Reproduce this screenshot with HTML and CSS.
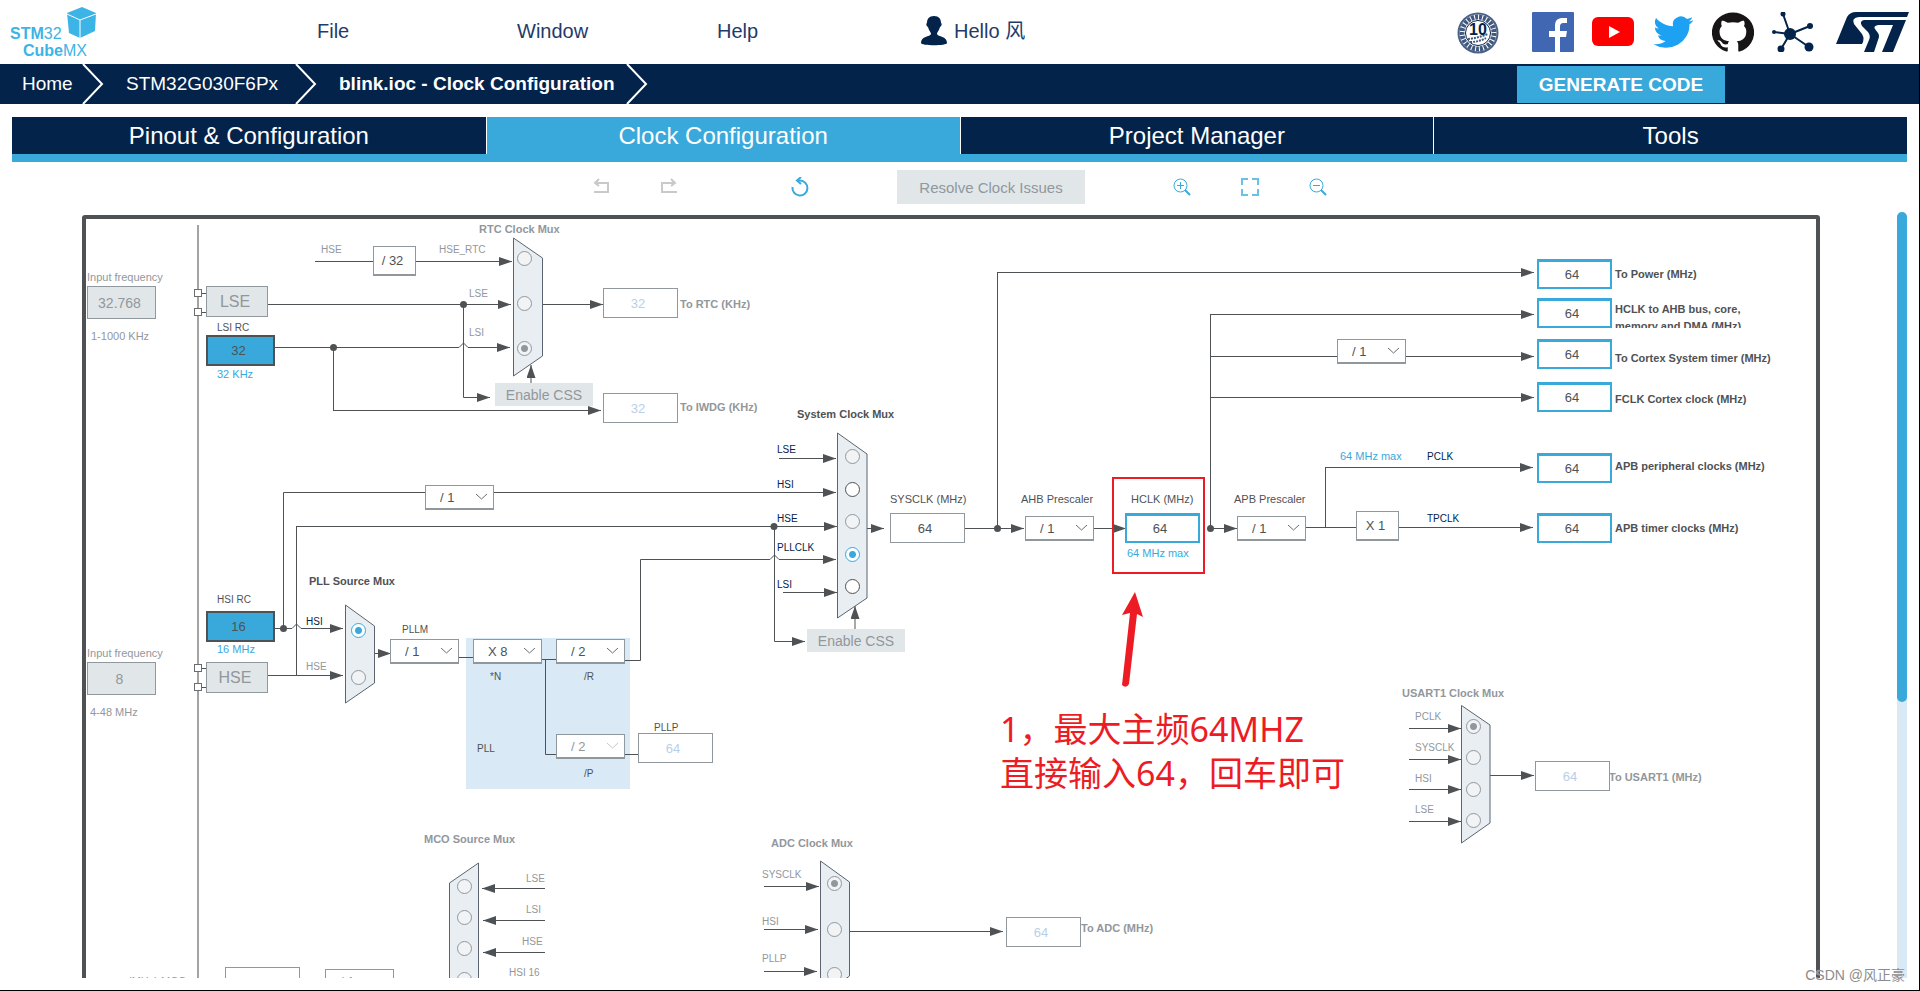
FILE: index.html
```html
<!DOCTYPE html>
<html lang="en">
<head>
<meta charset="utf-8">
<title>STM32CubeMX - blink.ioc</title>
<link rel="stylesheet" href="styles.css">
</head>
<body>
<header class="topbar">
  <a class="logo" href="#" aria-label="STM32CubeMX">
    <svg width="92" height="60" viewBox="6 0 92 60">
      <path fill="#3cb4e6" d="M67 13 82 7 96 13 95 31 80 38 69 33z"/>
      <path fill="none" stroke="#fff" d="M67 14 80 20 96 14M80 20V38"/>
      <text class="logo-text" x="10" y="39"><tspan class="strong">STM</tspan>32</text>
      <text class="logo-text" x="23" y="56"><tspan class="strong">Cube</tspan>MX</text>
    </svg>
  </a>
  <nav class="menu">
    <a href="#">File</a>
    <a href="#">Window</a>
    <a href="#">Help</a>
    <a class="user" href="#">
      <svg width="28" height="30" viewBox="0 0 28 30"><path fill="#03234b" d="M14 0c5 0 7 3 7 7 1 0 1 3-1 4-1 4-3 5-3 7 1 3 10 2 10 9 0 3-26 3-26 0 0-7 9-6 10-9 0-2-2-3-3-7-2-1-2-4-1-4 0-4 2-7 7-7z"/></svg>
      <span>Hello 风</span>
    </a>
  </nav>
  <div class="social">
    <a class="badge" href="#" aria-label="10 years">
      <svg width="42" height="42" viewBox="0 0 42 42">
        <circle cx="21" cy="21" r="19.5" fill="#fff" stroke="#4b6285" stroke-width="2"/>
        <circle cx="21" cy="21" r="16" fill="none" stroke="#41597f" stroke-width="5" stroke-dasharray="3 1"/>
        <circle cx="21" cy="21" r="12.5" fill="#fff" stroke="#03234b"/>
        <path d="M11 27q10-1 20-5M13 30q9 0 16-4" stroke="#41597f" stroke-width="2" stroke-dasharray="2 1" fill="none"/>
        <text class="badge-text" x="21" y="23" text-anchor="middle">10</text>
      </svg>
    </a>
    <a href="#" aria-label="Facebook">
      <svg width="42" height="40" viewBox="0 0 42 40"><rect width="42" height="40" rx="1" fill="#4267b2"/><path fill="#fff" d="M23 40V25h-6v-6h6v-5c0-6 3-8 8-8h4v5h-3c-3 0-4 1-4 4v4h7l-1 6h-6v15z"/></svg>
    </a>
    <a href="#" aria-label="YouTube">
      <svg width="42" height="40" viewBox="0 0 42 40"><rect y="5" width="42" height="29" rx="6" fill="#f00"/><path fill="#fff" d="M17 14v12l11-6z"/></svg>
    </a>
    <a href="#" aria-label="Twitter">
      <svg width="42" height="40" viewBox="0 0 24 24" preserveAspectRatio="none"><path fill="#1da1f2" d="M23.6 4.9c-.8.4-1.7.6-2.7.8 1-.6 1.7-1.5 2.1-2.6-.9.5-1.9.9-3 1.1a4.700 4.700 0 0 0-8 4.300C8 8.300 4.600 6.400 2.300 3.600a4.700 4.700 0 0 0 1.500 6.300c-.8 0-1.5-.2-2.1-.6 0 2.300 1.600 4.200 3.800 4.700-.7.2-1.400.2-2.100.1a4.700 4.700 0 0 0 4.400 3.300A9.500 9.500 0 0 1 .8 19.300a13.400 13.400 0 0 0 20.600-11.900c.9-.7 1.700-1.500 2.200-2.500z"/></svg>
    </a>
    <a href="#" aria-label="GitHub">
      <svg width="42" height="40" viewBox="0 0 24 24" preserveAspectRatio="none"><path fill="#171515" d="M12 .3a12 12 0 0 0-3.800 23.400c.6.1.8-.3.8-.6v-2c-3.300.7-4-1.600-4-1.600-.6-1.400-1.400-1.800-1.400-1.800-1-.7.1-.7.1-.7 1.200 0 1.900 1.200 1.900 1.200 1 1.800 2.800 1.300 3.500 1 0-.8.4-1.300.7-1.600-2.700-.3-5.500-1.300-5.500-6 0-1.200.5-2.300 1.300-3.100-.2-.4-.6-1.600 0-3.200 0 0 1-.3 3.400 1.200a11.500 11.500 0 0 1 6 0c2.300-1.500 3.300-1.200 3.300-1.200.6 1.600.2 2.800 0 3.200.9.8 1.300 1.900 1.300 3.200 0 4.600-2.800 5.600-5.500 5.900.5.400.9 1 .9 2.200v3.300c0 .3.1.7.8.6A12 12 0 0 0 12 .3"/></svg>
    </a>
    <a href="#" aria-label="ST Community">
      <svg width="42" height="40" viewBox="0 0 42 40" fill="#03234b"><path stroke="#03234b" stroke-width="2" d="M18 22 11 2M18 22 38 14M18 22 2 20M18 22 9 37M18 22 37 35"/><circle cx="18" cy="22" r="6"/><circle cx="11" cy="2" r="2.5"/><circle cx="38" cy="14" r="3"/><circle cx="2" cy="20" r="2"/><circle cx="9" cy="37" r="3.5"/><circle cx="37" cy="35" r="4.5"/></svg>
    </a>
    <a class="st" href="#" aria-label="STMicroelectronics">
      <svg width="73" height="40" viewBox="0 0 73 40" fill="#03234b">
        <path d="M0 32 11 5Q14 0 20 0H73L71 5H23Q15 6 18 12L26 22Q29 27 26 32Z"/>
        <path d="M28 8H49L47 13H42Q37 14 39 17L42 21Q44 24 42 28L38 40H28L33 28Q35 24 32 20L26 14Q23 9 28 8Z"/>
        <path d="M46 8H70L57 40H46L57 13H45Z"/>
      </svg>
    </a>
  </div>
</header>

<nav class="crumbs" aria-label="Breadcrumb">
  <ol>
    <li><a href="#">Home</a><svg width="22" height="40"><path d="M1 0 20 20 1 40"/></svg></li>
    <li><a href="#">STM32G030F6Px</a><svg width="22" height="40"><path d="M1 0 20 20 1 40"/></svg></li>
    <li class="current"><a href="#">blink.ioc - Clock Configuration</a><svg width="22" height="40"><path d="M1 0 20 20 1 40"/></svg></li>
  </ol>
  <button class="generate" type="button">GENERATE CODE</button>
</nav>

<nav class="tabs">
  <a href="#">Pinout &amp; Configuration</a>
  <a class="active" href="#">Clock Configuration</a>
  <a href="#">Project Manager</a>
  <a href="#">Tools</a>
</nav>

<div class="toolbar">
  <div class="tool-group">
    <button class="tool" type="button" disabled aria-label="Undo"><svg width="18" height="18" fill="none" stroke="#c9c9c9" stroke-width="2"><path d="M4 5H16V14H2"/><path d="M7 1 3 5 7 8"/></svg></button>
    <button class="tool" type="button" disabled aria-label="Redo"><svg width="18" height="18" fill="none" stroke="#c9c9c9" stroke-width="2"><path d="M15 5H2V14H17"/><path d="M11 1 15 5 11 8"/></svg></button>
  </div>
  <button class="tool reset" type="button" aria-label="Reset"><svg width="20" height="20" fill="none" stroke="#39a9dc" stroke-width="2"><path d="M7 3.5H10A7.5 7.5 0 1 1 2.5 10"/><path d="M11 0 7 3.5 11 7"/></svg></button>
  <button class="resolve" type="button" disabled>Resolve Clock Issues</button>
  <div class="tool-group">
    <button class="tool" type="button" aria-label="Zoom in"><svg width="18" height="18" fill="none" stroke="#39a9dc"><circle cx="7.5" cy="7.5" r="6.5"/><path d="M4 7.5H11M7.5 4V11"/><path d="M12 12 17 17" stroke-width="2"/></svg></button>
    <button class="tool" type="button" aria-label="Fit to window"><svg width="18" height="18" fill="none" stroke="#6cc0e6" stroke-width="2"><path d="M1 7V1H7M11 1H17V7M17 11V17H11M7 17H1V11"/></svg></button>
    <button class="tool" type="button" aria-label="Zoom out"><svg width="18" height="18" fill="none" stroke="#39a9dc"><circle cx="7.5" cy="7.5" r="6.5"/><path d="M4 7.5H11"/><path d="M12 12 17 17" stroke-width="2"/></svg></button>
  </div>
</div>

<main class="workspace">
  <div class="canvas">
    <div class="frame"></div>
    <div class="layer">
      <svg class="wires" width="1890" height="1000">
        <defs>
          <marker id="tip" markerUnits="userSpaceOnUse" markerWidth="13" markerHeight="9" refX="13" refY="4.5" orient="auto"><path fill="#4f5254" d="M0 0 13 4.5 0 9z"/></marker>
        </defs>
        <rect class="pll-area" x="466" y="638" width="164" height="151"/>
        <path class="rail" d="M198 225V1000"/>
        <path class="wire" d="M315 261.5H373M202 293.5H206M202 312.5H206M202 668.5H206M202 687.5H206M283.5 628V492.5H425M296.5 675V526.5M333.5 347V410M545.5 659V754.5H556M542 659.5H556M458 657.5H473M625 754.5H638M997.5 528V273M1210.5 528V314.5M1210 356.5H1337M1306 527.5H1356M1325.5 527V468"/>
        <g class="wire arrows">
          <path d="M416 261.5H512"/>
          <path d="M268 304.5H511"/>
          <path d="M463.5 304V397.5H490"/>
          <path d="M275 347.5H459L463.5 343 468 347.5H510"/>
          <path d="M333 410.5H601"/>
          <path d="M542 304.5H603"/>
          <path d="M531 383V365"/>
          <path d="M779 458.5H836"/>
          <path d="M493 492.5H836"/>
          <path d="M296 526.5H837"/>
          <path d="M774.5 526V641.5H805"/>
          <path d="M625 660.5H640.5V559.5H770L774.5 555 779 559.5H836"/>
          <path d="M783 592.5H837"/>
          <path d="M855 629V606"/>
          <path d="M867 528.5H884"/>
          <path d="M965 528.5H1024"/>
          <path d="M997 272.5H1534"/>
          <path d="M1093 528.5H1126"/>
          <path d="M1208 528.5H1237"/>
          <path d="M1210 314.5H1534"/>
          <path d="M1406 356.5H1534"/>
          <path d="M1210 397.5H1534"/>
          <path d="M1325 467.5H1533"/>
          <path d="M1398 527.5H1533"/>
          <path d="M275 628.5H292L296.5 624 301 628.5H343"/>
          <path d="M268 675.5H343"/>
          <path d="M374 653.5H391"/>
          <path d="M545 888.5H482"/>
          <path d="M545 920.5H483"/>
          <path d="M545 952.5H483"/>
          <path d="M764 886.5H819"/>
          <path d="M764 929.5H818"/>
          <path d="M764 971.5H817"/>
          <path d="M850 931.5H1003"/>
          <path d="M1409 728.5H1461"/>
          <path d="M1409 759.5H1461"/>
          <path d="M1409 789.5H1461"/>
          <path d="M1409 821.5H1461"/>
          <path d="M1490 775.5H1534"/>
        </g>
        <g class="joint">
          <circle cx="463.5" cy="304.5" r="3.5"/><circle cx="333.5" cy="347.5" r="3.5"/>
          <circle cx="283.5" cy="628.5" r="3.5"/><circle cx="774" cy="526.5" r="3.5"/>
          <circle cx="997.5" cy="528.5" r="3.5"/><circle cx="1210.5" cy="528.5" r="3.5"/>
        </g>
        <g class="pad">
          <rect x="194.5" y="289.5" width="7" height="7"/><rect x="194.5" y="308.5" width="7" height="7"/>
          <rect x="194.5" y="664.5" width="7" height="7"/><rect x="194.5" y="683.5" width="7" height="7"/>
        </g>
        <g class="mux">
          <path d="M513.5 238 542.5 258V356L513.5 376z"/>
          <path d="M837.5 433 867 454V598L837.5 618z"/>
          <path d="M345.5 605 374.5 626V683L345.5 703z"/>
          <path d="M478.5 863 449.5 883V1010H478.5z"/>
          <path d="M820.5 861 849.5 882V976L820.5 997z"/>
          <path d="M1461.5 705.5 1490 725V823L1461.5 843z"/>
        </g>
        <g class="title muted">
          <text x="479" y="233">RTC Clock Mux</text>
          <text x="680" y="308">To RTC (KHz)</text>
          <text x="680" y="411">To IWDG (KHz)</text>
          <text x="424" y="843">MCO Source Mux</text>
          <text x="771" y="847">ADC Clock Mux</text>
          <text x="1081" y="932">To ADC (MHz)</text>
          <text x="1402" y="697">USART1 Clock Mux</text>
          <text x="1609" y="781">To USART1 (MHz)</text>
        </g>
        <g class="title">
          <text x="797" y="418">System Clock Mux</text>
          <text x="309" y="585">PLL Source Mux</text>
          <text x="1615" y="278">To Power (MHz)</text>
          <text x="1615" y="362">To Cortex System timer (MHz)</text>
          <text x="1615" y="403">FCLK Cortex clock (MHz)</text>
          <text x="1615" y="470">APB peripheral clocks (MHz)</text>
          <text x="1615" y="532">APB timer clocks (MHz)</text>
        </g>
        <g class="note muted">
          <text x="87" y="281">Input frequency</text>
          <text x="91" y="340">1-1000 KHz</text>
          <text x="87" y="657">Input frequency</text>
          <text x="90" y="716">4-48 MHz</text>
          <text x="128" y="985">(MHz) MCO</text>
        </g>
        <g class="note">
          <text x="890" y="503">SYSCLK (MHz)</text>
          <text x="1021" y="503">AHB Prescaler</text>
          <text x="1131" y="503">HCLK (MHz)</text>
          <text x="1234" y="503">APB Prescaler</text>
        </g>
        <g class="note accent">
          <text x="217" y="378">32 KHz</text>
          <text x="217" y="653">16 MHz</text>
          <text x="1127" y="557">64 MHz max</text>
          <text x="1340" y="460">64 MHz max</text>
        </g>
        <g class="signal muted">
          <text x="321" y="253">HSE</text><text x="439" y="253">HSE_RTC</text>
          <text x="469" y="297">LSE</text><text x="469" y="336">LSI</text>
          <text x="306" y="670">HSE</text>
          <text x="526" y="882">LSE</text><text x="526" y="913">LSI</text>
          <text x="522" y="945">HSE</text><text x="509" y="976">HSI 16</text>
          <text x="762" y="878">SYSCLK</text><text x="762" y="925">HSI</text><text x="762" y="962">PLLP</text>
          <text x="1415" y="720">PCLK</text><text x="1415" y="751">SYSCLK</text>
          <text x="1415" y="782">HSI</text><text x="1415" y="813">LSE</text>
        </g>
        <g class="signal">
          <text x="217" y="331">LSI RC</text><text x="217" y="603">HSI RC</text>
          <text x="402" y="633">PLLM</text><text x="490" y="680">*N</text>
          <text x="584" y="680">/R</text><text x="584" y="777">/P</text>
          <text x="477" y="752">PLL</text><text x="654" y="731">PLLP</text>
        </g>
        <g class="signal navy">
          <text x="777" y="453">LSE</text><text x="777" y="488">HSI</text><text x="777" y="522">HSE</text>
          <text x="777" y="551">PLLCLK</text><text x="777" y="588">LSI</text><text x="306" y="625">HSI</text>
          <text x="1427" y="460">PCLK</text><text x="1427" y="522">TPCLK</text>
        </g>
      </svg>

      <p class="node clipped-label">HCLK to AHB bus, core,<br>memory and DMA (MHz)</p>

      <input class="node freq lse-freq" value="32.768" disabled aria-label="LSE input frequency">
      <input class="node freq hse-freq" value="8" disabled aria-label="HSE input frequency">
      <button class="node osc lse" type="button" disabled>LSE</button>
      <button class="node osc hse" type="button" disabled>HSE</button>
      <output class="node rc lsi-rc" aria-label="LSI RC">32</output>
      <output class="node rc hsi-rc" aria-label="HSI RC">16</output>
      <output class="node fixed rtc-div">/ 32</output>
      <output class="node fixed timer-mul">X 1</output>
      <button class="node css rtc-css" type="button" disabled>Enable CSS</button>
      <button class="node css sys-css" type="button" disabled>Enable CSS</button>

      <input class="node value rtc-out" value="32" disabled aria-label="To RTC (KHz)">
      <input class="node value iwdg-out" value="32" disabled aria-label="To IWDG (KHz)">
      <input class="node value pllp-out" value="64" disabled aria-label="PLLP">
      <input class="node value adc-out" value="64" disabled aria-label="To ADC (MHz)">
      <input class="node value usart-out" value="64" disabled aria-label="To USART1 (MHz)">
      <input class="node value mco-out" value="64" disabled aria-label="MCO (MHz)">
      <input class="node value sysclk" value="64" aria-label="SYSCLK (MHz)">
      <input class="node value live hclk" value="64" aria-label="HCLK (MHz)">
      <input class="node value live out-power" value="64" aria-label="To Power (MHz)">
      <input class="node value live out-ahb" value="64" aria-label="HCLK to AHB bus, core, memory and DMA (MHz)">
      <input class="node value live out-timer" value="64" aria-label="To Cortex System timer (MHz)">
      <input class="node value live out-fclk" value="64" aria-label="FCLK Cortex clock (MHz)">
      <input class="node value live out-apb" value="64" aria-label="APB peripheral clocks (MHz)">
      <input class="node value live out-apb-timer" value="64" aria-label="APB timer clocks (MHz)">

      <select class="node divider hsi-div" aria-label="HSI divider"><option>/ 1</option></select>
      <select class="node divider pllm" aria-label="PLLM"><option>/ 1</option></select>
      <select class="node divider plln" aria-label="PLL N"><option>X 8</option></select>
      <select class="node divider pllr" aria-label="PLL R"><option>/ 2</option></select>
      <select class="node divider pllp" aria-label="PLL P" disabled><option>/ 2</option></select>
      <select class="node divider ahb" aria-label="AHB Prescaler"><option>/ 1</option></select>
      <select class="node divider apb" aria-label="APB Prescaler"><option>/ 1</option></select>
      <select class="node divider cortex" aria-label="Cortex timer prescaler"><option>/ 1</option></select>
      <select class="node divider mco-div" aria-label="MCO divider" disabled><option>/ 1</option></select>

      <div class="node choices rtc-mux" role="radiogroup" aria-label="RTC Clock Mux">
        <input type="radio" name="rtc" aria-label="HSE_RTC" disabled><input type="radio" name="rtc" aria-label="LSE" disabled><input type="radio" name="rtc" aria-label="LSI" checked disabled>
      </div>
      <div class="node choices sys-mux" role="radiogroup" aria-label="System Clock Mux">
        <input type="radio" name="sys" aria-label="LSE" disabled><input type="radio" name="sys" aria-label="HSI"><input type="radio" name="sys" aria-label="HSE" disabled><input type="radio" name="sys" aria-label="PLLCLK" checked><input type="radio" name="sys" aria-label="LSI">
      </div>
      <div class="node choices pll-mux" role="radiogroup" aria-label="PLL Source Mux">
        <input type="radio" name="pll" aria-label="HSI" checked><input type="radio" name="pll" aria-label="HSE" disabled>
      </div>
      <div class="node choices mco-mux" role="radiogroup" aria-label="MCO Source Mux">
        <input type="radio" name="mco" aria-label="LSE" disabled><input type="radio" name="mco" aria-label="LSI" disabled><input type="radio" name="mco" aria-label="HSE" disabled><input type="radio" name="mco" aria-label="HSI 16" disabled>
      </div>
      <div class="node choices adc-mux" role="radiogroup" aria-label="ADC Clock Mux">
        <input type="radio" name="adc" aria-label="SYSCLK" checked disabled><input type="radio" name="adc" aria-label="HSI" disabled><input type="radio" name="adc" aria-label="PLLP" disabled>
      </div>
      <div class="node choices usart-mux" role="radiogroup" aria-label="USART1 Clock Mux">
        <input type="radio" name="usart" aria-label="PCLK" checked disabled><input type="radio" name="usart" aria-label="SYSCLK" disabled><input type="radio" name="usart" aria-label="HSI" disabled><input type="radio" name="usart" aria-label="LSE" disabled>
      </div>

      <svg class="node callout" width="100" height="220" viewBox="1110 475 100 220">
        <rect x="1113" y="478" width="91" height="95" fill="none" stroke="#ed1c24" stroke-width="2"/>
        <path fill="#ed1c24" d="M1135 592 1143 617 1137 614 1129 684Q1126 689 1122 685L1130 613 1122 615z"/>
      </svg>
      <p class="node remark">1，最大主频64MHZ<br>直接输入64，回车即可</p>
    </div>
  </div>
  <div class="scrollbar"><div class="thumb"></div></div>
</main>
<p class="watermark">CSDN @风正豪</p>
</body>
</html>
```
FILE: styles.css
```css
* { box-sizing: border-box; }

:root {
  --navy: #03234b;
  --blue: #39a9dc;
  --ink: #4f5254;
  --muted: #92979b;
  --edge: #90989e;
  --grey: #e1e6e9;
}

body {
  position: relative;
  display: flex;
  flex-direction: column;
  height: 100vh;
  margin: 0;
  padding-bottom: 12px;
  overflow: hidden;
  border-right: 1px solid #000;
  border-bottom: 1px solid #000;
  background: #fff;
  font-family: "Liberation Sans", Arial, "Noto Sans CJK SC", sans-serif;
  color: var(--ink);
}

a { color: inherit; text-decoration: none; }
p { margin: 0; }
svg { display: block; }
button, input, select { margin: 0; font-family: inherit; }

/* Top bar */
.topbar { display: flex; flex: none; height: 64px; padding: 0 10px 0 6px; }
.logo { width: 311px; }
.logo-text { font-size: 16px; fill: #3cb4e6; }
.strong { font-weight: bold; }
.menu { display: flex; color: #1f3a6b; font-size: 20px; line-height: 62px; }
.menu a { width: 200px; }
.menu .user { display: flex; align-items: center; gap: 6px; margin-left: 3px; height: 62px; }
.menu span { font-weight: normal; }
.social { display: flex; gap: 18px; margin-left: auto; padding-top: 12px; }
.badge { margin-right: 15px; }
.badge-text { font-size: 16px; font-weight: bold; fill: var(--navy); }
.st { margin-left: 4px; }

/* Breadcrumb */
.crumbs {
  display: flex;
  flex: none;
  justify-content: space-between;
  height: 40px;
  padding-right: 194px;
  background: var(--navy);
  color: #fff;
  font-size: 19px;
}
.crumbs ol { display: grid; grid-template-columns: 104px 213px 331px; margin: 0; padding: 0; list-style: none; }
.crumbs li { display: flex; align-items: center; justify-content: space-between; padding-left: 22px; white-space: nowrap; }
.crumbs path { fill: none; stroke: #fff; stroke-width: 2; }
.current { font-weight: bold; }
.generate {
  width: 208px;
  margin: 2px 0 1px;
  padding: 0;
  border: 0;
  background: var(--blue);
  color: #fff;
  font-size: 19px;
  font-weight: bold;
}

/* Tabs */
.tabs {
  display: grid;
  flex: none;
  grid-template-columns: repeat(4, 1fr);
  margin: 13px 12px 0;
  border-bottom: 8px solid var(--blue);
  color: #fff;
  font-size: 24px;
  line-height: 37px;
  text-align: center;
}
.tabs a { background: var(--navy); }
.tabs a + a { border-left: 1px solid #fff; }
.tabs .active { background: var(--blue); }

/* Toolbar */
.toolbar { display: flex; flex: none; align-items: center; justify-content: center; height: 50px; }
.tool-group { display: flex; gap: 50px; }
.tool { padding: 0; border: 0; background: none; }
.reset { margin: 0 87px 0 112px; }
.resolve {
  width: 188px;
  height: 34px;
  margin-right: 88px;
  padding: 0;
  border: 0;
  background: var(--grey);
  color: #90989e;
  font-size: 15px;
}

/* Workspace */
.workspace { display: flex; flex: 1; min-height: 0; padding-right: 12px; }
.canvas { position: relative; flex: 1; overflow: hidden; }
.scrollbar { width: 10px; border-radius: 5px 5px 0 0; background: #d9e9f6; }
.thumb { height: 64%; border-radius: 5px; background: var(--blue); }
.frame {
  position: absolute;
  inset: 3px 77px -20px 82px;
  border: 4px solid var(--ink);
  border-radius: 3px;
}

.layer { position: absolute; inset: -212px 0 0 0; }
.node { position: absolute; }
.wires { position: absolute; top: 0; left: 0; }
.wire { fill: none; stroke: var(--ink); }
.arrows path { marker-end: url(#tip); }
.rail { stroke: #a3a3a3; stroke-width: 2; }
.joint { fill: var(--ink); }
.pad { fill: #fff; stroke: #6a6d6f; stroke-width: 1; }
.mux { fill: #e9eef2; stroke: #5b6470; stroke-width: 1; }
.pll-area { fill: #d9e9f6; }
.title { font-size: 11px; font-weight: bold; fill: var(--ink); }
.note { font-size: 11px; fill: var(--ink); }
.signal { font-size: 10px; fill: var(--ink); }
.muted { fill: var(--muted); }
.accent { fill: var(--blue); }
.navy { fill: var(--navy); }

.clipped-label {
  left: 1615px;
  top: 301px;
  height: 27px;
  overflow: hidden;
  font-size: 11px;
  font-weight: bold;
  line-height: 17px;
}

.freq {
  width: 69px;
  height: 33px;
  padding: 0 4px 0 0;
  border: 1px solid var(--edge);
  background: var(--grey);
  color: var(--muted);
  font-size: 14px;
  text-align: center;
}
.lse-freq { left: 87px; top: 286px; }
.hse-freq { left: 87px; top: 662px; }

.osc {
  width: 62px;
  height: 31px;
  padding: 0 4px 0 0;
  border: 1px solid var(--edge);
  background: var(--grey);
  color: var(--muted);
  font-size: 16px;
}
.lse { left: 206px; top: 286px; }
.hse { left: 206px; top: 662px; }

.rc {
  width: 69px;
  height: 31px;
  padding-right: 4px;
  border: 2px solid var(--ink);
  background: var(--blue);
  font-size: 13px;
  line-height: 27px;
  text-align: center;
}
.lsi-rc { left: 206px; top: 335px; }
.hsi-rc { left: 206px; top: 611px; }

.fixed {
  width: 43px;
  height: 30px;
  padding-right: 4px;
  border: 1px solid var(--edge);
  border-bottom-width: 2px;
  background: #fff;
  font-size: 13px;
  line-height: 28px;
  text-align: center;
}
.rtc-div { left: 373px; top: 246px; }
.timer-mul { left: 1356px; top: 511px; }

.css {
  width: 98px;
  height: 23px;
  padding: 0;
  border: 0;
  background: var(--grey);
  color: var(--muted);
  font-size: 14px;
}
.rtc-css { left: 495px; top: 383px; }
.sys-css { left: 807px; top: 629px; }

.value {
  width: 75px;
  height: 30px;
  padding: 0 5px 0 0;
  border: 1px solid var(--edge);
  background: #fff;
  color: var(--ink);
  font-size: 13px;
  text-align: center;
}
.value:disabled { color: #b9cfe8; }
.live { border: 2px solid var(--blue); border-top-width: 3px; }
.rtc-out { left: 603px; top: 288px; }
.iwdg-out { left: 603px; top: 393px; }
.pllp-out { left: 638px; top: 733px; }
.adc-out { left: 1006px; top: 917px; }
.usart-out { left: 1535px; top: 761px; }
.mco-out { left: 225px; top: 967px; }
.sysclk { left: 890px; top: 513px; }
.hclk { left: 1125px; top: 513px; }
.out-power { left: 1537px; top: 259px; }
.out-ahb { left: 1537px; top: 298px; }
.out-timer { left: 1537px; top: 339px; }
.out-fclk { left: 1537px; top: 382px; }
.out-apb { left: 1537px; top: 453px; }
.out-apb-timer { left: 1537px; top: 513px; }

.divider {
  width: 69px;
  height: 25px;
  padding: 0 0 0 14px;
  appearance: none;
  border: 1px solid var(--edge);
  border-bottom-width: 2px;
  border-radius: 0;
  background: #fff url("data:image/svg+xml,%3Csvg xmlns='http://www.w3.org/2000/svg' width='13' height='8' fill='none' stroke='%236a6d70'%3E%3Cpath d='M1 1 6.5 6 12 1'/%3E%3C/svg%3E") no-repeat right 5px center;
  color: var(--ink);
  font-size: 13px;
}
.divider:disabled {
  background-image: url("data:image/svg+xml,%3Csvg xmlns='http://www.w3.org/2000/svg' width='13' height='8' fill='none' stroke='%23c4c8cb'%3E%3Cpath d='M1 1 6.5 6 12 1'/%3E%3C/svg%3E");
  color: var(--muted);
  opacity: 1;
}
.hsi-div { left: 425px; top: 485px; }
.pllm { left: 390px; top: 639px; }
.plln { left: 473px; top: 639px; }
.pllr { left: 556px; top: 639px; }
.pllp { left: 556px; top: 734px; }
.ahb { left: 1025px; top: 516px; }
.apb { left: 1237px; top: 516px; }
.cortex { left: 1337px; top: 339px; }
.mco-div { left: 325px; top: 969px; }

.choices { display: flex; flex-direction: column; justify-content: space-between; }
.choices input {
  width: 15px;
  height: 15px;
  margin: 0;
  appearance: none;
  border: 1px solid var(--ink);
  border-radius: 50%;
  background: #fff;
}
.choices input:disabled { border-color: var(--edge); background: #f1f3f5; }
.choices input:checked { border-color: var(--blue); background: radial-gradient(circle, var(--blue) 3px, #fff 4px); }
.choices input:checked:disabled { border-color: var(--edge); background: radial-gradient(circle, var(--edge) 3px, #f1f3f5 4px); }
.rtc-mux { left: 517px; top: 251px; height: 105px; }
.sys-mux { left: 845px; top: 449px; height: 145px; }
.pll-mux { left: 351px; top: 623px; height: 62px; }
.mco-mux { left: 457px; top: 879px; height: 108px; }
.adc-mux { left: 827px; top: 876px; height: 106px; }
.usart-mux { left: 1466px; top: 719px; height: 109px; }

/* Overlaid remarks */
.callout { left: 1110px; top: 475px; }
.remark {
  left: 1000px;
  top: 707px;
  color: #ed1c24;
  font-family: "Noto Sans", "Noto Sans CJK SC", sans-serif;
  font-size: 34px;
  line-height: 44px;
  white-space: nowrap;
}
.watermark {
  position: absolute;
  right: 14px;
  bottom: 5px;
  color: #8c8c8c;
  font-size: 14px;
  line-height: 20px;
  text-shadow: 0 0 1px #fff;
}
```
